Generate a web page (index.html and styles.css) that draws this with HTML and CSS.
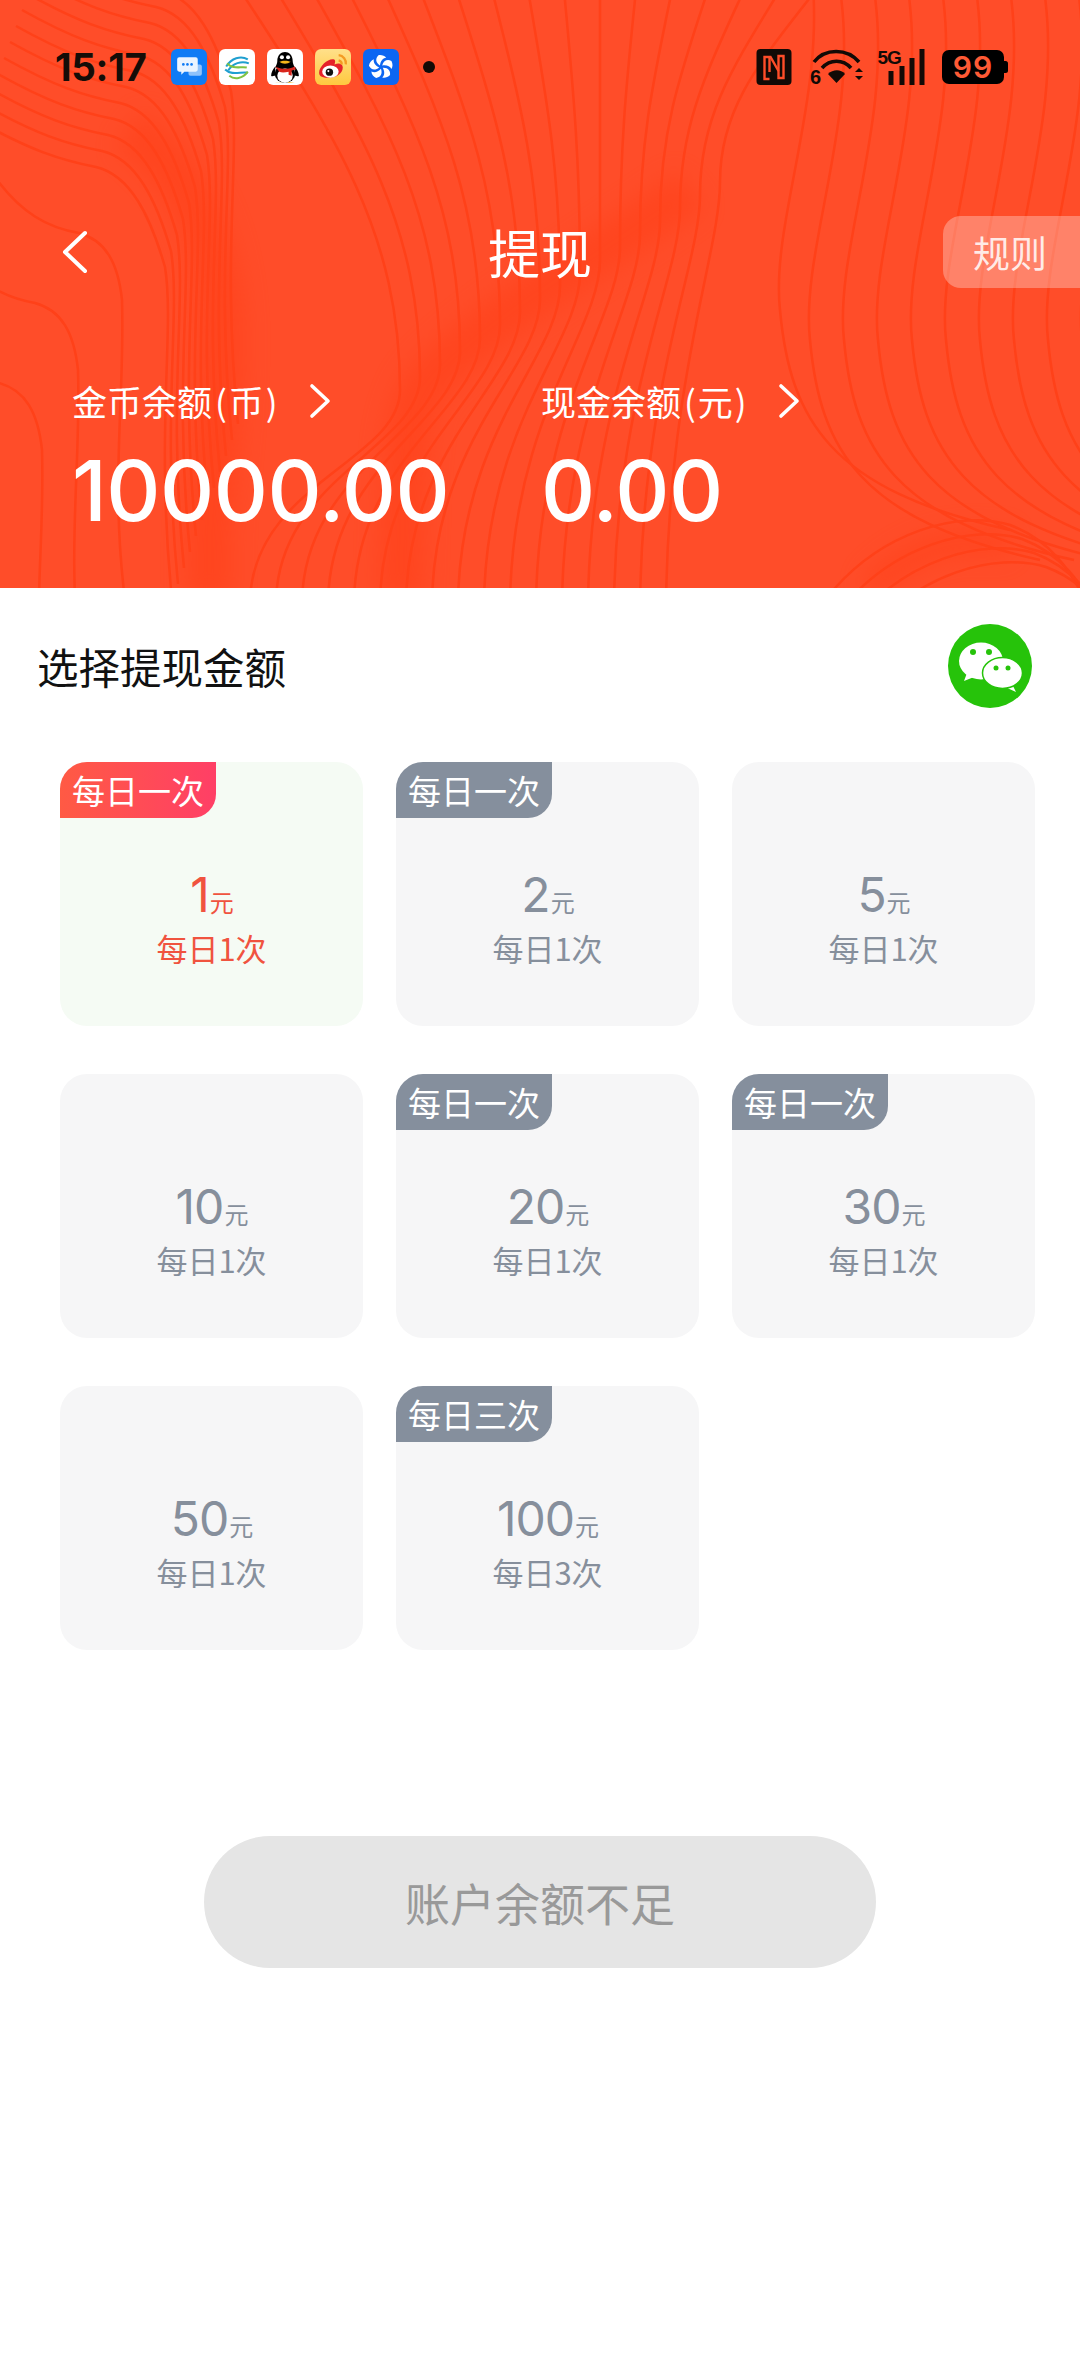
FILE: index.html
```html
<!DOCTYPE html>
<html lang="zh">
<head>
<meta charset="utf-8">
<title>提现</title>
<link rel="stylesheet" href="styles.css">
</head>
<body>
<header class="hero">
  <svg class="contours" viewBox="0 0 1080 588" aria-hidden="true">
    <defs>
      <path id="c1" d="M-20 122C30 150 60 160 96 167C130 175 150 215 165 267C175 330 155 430 172 600"/>
      <path id="c2" d="M-10 170C20 215 50 228 79 233C105 240 118 262 122 300C125 400 110 480 125 600"/>
      <path id="c6" d="M840 -10C860 120 800 250 810 340C820 450 860 520 1040 560"/>
      <path id="c8" d="M825 600C880 530 960 510 1010 525C1050 540 1070 570 1085 600"/>
    </defs>
    <g class="shade">
      <path d="M130 130C200 180 222 260 222 340C222 450 205 500 210 600"/>
      <path d="M690 190C640 230 480 320 425 385C400 420 405 500 400 600"/>
      <path class="shade-thin" d="M870 590C910 545 960 535 1010 545"/>
    </g>
    <g class="lines">
      <use href="#c1"/><use href="#c1" transform="translate(6 -16)"/><use href="#c1" transform="translate(12 -32)"/><use href="#c1" transform="translate(18 -48)"/><use href="#c1" transform="translate(24 -64)"/><use href="#c1" transform="translate(30 -80)"/><use href="#c1" transform="translate(36 -96)"/><use href="#c1" transform="translate(42 -112)"/><use href="#c1" transform="translate(48 -128)"/><use href="#c1" transform="translate(54 -144)"/><use href="#c1" transform="translate(60 -160)"/><use href="#c1" transform="translate(66 -176)"/>
      <use href="#c2"/><use href="#c2" transform="translate(-44 70)"/><use href="#c2" transform="translate(-80 150)"/>
      <path d="M240 -10C336 136 400 234 400 390C400 460 254 484 250 600"/>
      <path d="M276 -10C362 132 420 226 420 377C420 447 280 477 276 600"/>
      <path d="M312 -10C389 127 440 218 440 364C440 434 306 470 302 600"/>
      <path d="M348 -10C415 123 460 211 460 351C460 421 332 463 328 600"/>
      <path d="M384 -10C442 118 480 203 480 338C480 408 358 456 354 600"/>
      <path d="M420 -10C468 114 500 195 500 325C500 395 384 449 380 600"/>
      <path d="M456 -10C494 109 520 187 520 312C520 382 410 442 406 600"/>
      <path d="M492 -10C521 105 540 179 540 299C540 369 436 434 432 600"/>
      <path d="M528 -10C547 100 560 172 560 286C560 356 462 427 458 600"/>
      <path d="M564 -10C574 96 580 164 580 273C580 343 488 420 484 600"/>
      <path d="M600 -10C600 91 600 156 600 260C600 330 514 413 510 600"/>
      <path d="M636 -10C626 86 620 148 620 247C620 317 540 406 536 600"/>
      <path d="M672 -10C653 82 640 140 640 234C640 304 566 399 562 600"/>
      <path d="M708 -10C679 77 660 133 660 221C660 291 592 392 588 600"/>
      <path d="M744 -10C706 73 680 125 680 208C680 278 618 385 614 600"/>
      <path d="M780 -10C732 68 700 117 700 195C700 265 644 377 640 600"/>
      <path d="M816 -10C758 64 720 109 720 182C720 252 670 370 666 600"/>
      <use href="#c6" transform="translate(-30 -30)"/><use href="#c6"/><use href="#c6" transform="translate(34 0)"/><use href="#c6" transform="translate(68 0)"/><use href="#c6" transform="translate(102 0)"/><use href="#c6" transform="translate(136 0)"/><use href="#c6" transform="translate(170 0)"/><use href="#c6" transform="translate(204 0)"/><use href="#c6" transform="translate(238 0)"/><use href="#c6" transform="translate(272 0)"/>
      <use href="#c8"/><use href="#c8" transform="translate(12 14)"/><use href="#c8" transform="translate(24 28)"/><use href="#c8" transform="translate(36 42)"/>
    </g>
  </svg>

  <div class="status">
    <span class="time">15:17</span>
    <div class="apps">
      <svg class="app" viewBox="0 0 35 35"><rect width="35" height="35" rx="6" fill="#0f7bf5"/><rect x="17" y="15" width="13" height="11" rx="2" fill="#8fc2fb"/><path d="M8 8h16a2 2 0 0 1 2 2v10a2 2 0 0 1-2 2H13l-3 3v-3H8a2 2 0 0 1-2-2V10a2 2 0 0 1 2-2z" fill="#eaf4ff"/><circle cx="12" cy="15" r="1.300" fill="#0f7bf5"/><circle cx="16" cy="15" r="1.300" fill="#0f7bf5"/><circle cx="20" cy="15" r="1.300" fill="#0f7bf5"/></svg>
      <svg class="app" viewBox="0 0 35 35"><rect width="35" height="35" rx="6" fill="#fff"/><g fill="none" stroke-width="2"><path d="M7 17C12 9 21 6 28 10" stroke="#1f9fd0"/><path d="M9 21C13 14 22 11 29 14" stroke="#1f9fd0"/><path d="M8 14C13 20 21 17 27 18" stroke="#7fc241"/><path d="M6 20C12 26 21 22 28 23" stroke="#1f9fd0"/><path d="M10 26C15 30 23 29 28 22" stroke="#7fc241"/></g></svg>
      <svg class="app" viewBox="0 0 35 35"><rect width="35" height="35" rx="6" fill="#fff"/><ellipse cx="17.500" cy="24" rx="10" ry="9" fill="#000"/><path d="M10 12c0-12 15-12 15 0 0 2 1 4 2 6-5 3-14 3-19 0 1-2 2-4 2-6z" fill="#000"/><path d="M8 26c-2 0-4 1-4 0 0-3 2-7 4-9z M27 26c2 0 4 1 4 0 0-3-2-7-4-9z" fill="#000"/><ellipse cx="17.500" cy="26" rx="7.500" ry="7" fill="#fff"/><circle cx="14.500" cy="8" r="2" fill="#fff"/><circle cx="20.500" cy="8" r="2" fill="#fff"/><path d="M12 12.500c3-1.500 8-1.500 11 0-3 2.500-8 2.500-11 0z" fill="#f6b51a"/><path d="M8 17c6 3 13 3 19 0l1 3-4 1 0 5-3-1v-3c-4 1-7 1-9 0z" fill="#d9251c"/><path d="M9 33l6-1h-1l-6 1zM20 32l7 1-6 0z" fill="#f6b51a"/></svg>
      <svg class="app" viewBox="0 0 35 35"><defs><linearGradient id="wb" x1="0" y1="0" x2="0" y2="1"><stop offset="0" stop-color="#ffe08a"/><stop offset="1" stop-color="#ffc93f"/></linearGradient></defs><rect width="35" height="35" rx="6" fill="url(#wb)"/><path d="M4 23c0-6 8-13 13-13 3 0 3 2 2 5 4-2 8-1 8 3 0 6-7 10-13 10S4 27 4 23z" fill="#e6212a"/><ellipse cx="15" cy="22" rx="8" ry="6" fill="#fff"/><circle cx="14" cy="22.500" r="3.600" fill="#111"/><circle cx="13" cy="21.500" r="1" fill="#fff"/><path d="M23 6a8 8 0 0 1 7 9M23 11a4 4 0 0 1 3 4" fill="none" stroke="#f49b23" stroke-width="2.200"/></svg>
      <svg class="app" viewBox="0 0 35 35"><rect width="35" height="35" rx="6" fill="#0c66f2"/><g fill="#fff"><path id="blade" d="M16.500 16C12 13 12 9 15 6c3-.5 6 .5 7.500 2.500C19 9 17 12 16.500 16z"/><use href="#blade" transform="rotate(72 17.500 17.500)"/><use href="#blade" transform="rotate(144 17.500 17.500)"/><use href="#blade" transform="rotate(216 17.500 17.500)"/><use href="#blade" transform="rotate(288 17.500 17.500)"/></g></svg>
      <span class="dot"></span>
    </div>
    <div class="sysicons">
      <svg class="nfc" viewBox="0 0 35 36"><rect width="35" height="36" rx="4" fill="#120a06"/><path d="M13 30H8V8h6l8 14" fill="none" stroke="#ff4d29" stroke-width="2.400"/><path d="M13 9v14M22 14v15h5V7h-5v7" fill="none" stroke="#ff4d29" stroke-width="2.400"/></svg>
      <svg class="wifi" viewBox="0 0 54 36"><g fill="none" stroke="#120a06" stroke-width="3.600"><path d="M4 13C15 -1 37 -1 49 13"/><path d="M12 19C20 10 33 10 41 19"/></g><path d="M18 25c5-5 13-5 17 0l-8.500 9z" fill="#120a06"/><path d="M45 23l4 -4 4 4zM45 27l4 4 4-4z" fill="#120a06"/><text class="wifi-six" x="0" y="35">6</text></svg>
      <svg class="signal" viewBox="0 0 46 36"><text class="five-g" x="-1" y="15">5G</text><g fill="#120a06"><rect x="10" y="22" width="5" height="14"/><rect x="21" y="17" width="5" height="19"/><rect x="31" y="9" width="5" height="27"/><rect x="41" y="0" width="5" height="36"/></g></svg>
      <svg class="battery" viewBox="0 0 66 34"><rect width="62" height="34" rx="7" fill="#000"/><path d="M62 11h1.500a2.500 2.500 0 0 1 2.500 2.500v7a2.500 2.500 0 0 1-2.500 2.500H62z" fill="#000"/><text class="batt" x="31" y="28">99</text></svg>
    </div>
  </div>

  <nav class="nav">
    <svg class="back" viewBox="0 0 30 44"><path d="M25 3L5 22l20 19" fill="none" stroke="#fff" stroke-width="4" stroke-linecap="round" stroke-linejoin="round"/></svg>
    <h1 class="page-title">提现</h1>
    <span class="rule">规则</span>
  </nav>

  <div class="balances">
    <div class="balance balance-coin">
      <div class="label">金币余额<span class="unit">(币)</span><svg class="chev" viewBox="0 0 22 36"><path d="M3 3l16 15L3 33" fill="none" stroke="#fff" stroke-width="3.600" stroke-linecap="round" stroke-linejoin="round"/></svg></div>
      <div class="num">10000.00</div>
    </div>
    <div class="balance">
      <div class="label">现金余额<span class="unit">(元)</span><svg class="chev" viewBox="0 0 22 36"><path d="M3 3l16 15L3 33" fill="none" stroke="#fff" stroke-width="3.600" stroke-linecap="round" stroke-linejoin="round"/></svg></div>
      <div class="num">0.00</div>
    </div>
  </div>
</header>

<main>
  <div class="pick">
    <h2 class="pick-title">选择提现金额</h2>
    <svg class="wechat" viewBox="0 0 84 84"><circle cx="42" cy="42" r="42" fill="#26c30a"/><path d="M19 49l-3 8 10-4z" fill="#fff"/><ellipse cx="33" cy="37" rx="22" ry="18.500" fill="#fff"/><circle cx="25" cy="28" r="3" fill="#26c30a"/><circle cx="41" cy="28" r="3" fill="#26c30a"/><path d="M63 58l5 10-11-5z" fill="#fff"/><ellipse cx="54.500" cy="49" rx="20" ry="15.500" fill="#fff" stroke="#26c30a" stroke-width="1.500"/><circle cx="48" cy="44" r="2.500" fill="#26c30a"/><circle cx="60" cy="44" r="2.500" fill="#26c30a"/></svg>
  </div>

  <div class="grid">
    <div class="card card-active"><span class="badge">每日一次</span><div class="amount">1<small>元</small></div><div class="times">每日1次</div></div>
    <div class="card"><span class="badge">每日一次</span><div class="amount">2<small>元</small></div><div class="times">每日1次</div></div>
    <div class="card"><div class="amount">5<small>元</small></div><div class="times">每日1次</div></div>
    <div class="card"><div class="amount">10<small>元</small></div><div class="times">每日1次</div></div>
    <div class="card"><span class="badge">每日一次</span><div class="amount">20<small>元</small></div><div class="times">每日1次</div></div>
    <div class="card"><span class="badge">每日一次</span><div class="amount">30<small>元</small></div><div class="times">每日1次</div></div>
    <div class="card"><div class="amount">50<small>元</small></div><div class="times">每日1次</div></div>
    <div class="card"><span class="badge">每日三次</span><div class="amount">100<small>元</small></div><div class="times">每日3次</div></div>
  </div>

  <button class="submit" type="button">账户余额不足</button>
</main>
</body>
</html>
```
FILE: styles.css
```css
* { box-sizing: border-box; }
html, body { margin: 0; padding: 0; }
body {
  width: 1080px;
  min-height: 2362px;
  background: #fff;
  font-family: "Noto Sans CJK SC", "Inter", sans-serif;
  overflow-x: hidden;
}
.hero {
  position: relative;
  height: 588px;
  padding-top: 49px;
  background: #ff4d29;
  color: #fff;
  overflow: hidden;
}
.contours { position: absolute; inset: 0; width: 1080px; height: 588px; }
.lines { fill: none; stroke: #ff4119; stroke-width: 2.500; }
.shade { fill: none; stroke: #ff3f17; stroke-width: 44; opacity: .55; filter: blur(12px); }
.shade-thin { stroke-width: 24; }

.status {
  position: relative;
  display: flex;
  align-items: center;
  height: 36px;
  padding: 0 72px 0 55px;
}
.time {
  font-family: "Inter", sans-serif;
  font-weight: 700;
  font-size: 38.500px;
  line-height: 36px;
  letter-spacing: -.3px;
  color: #150d08;
  width: 116px;
}
.apps { display: flex; align-items: center; gap: 12px; }
.app { width: 36px; height: 36px; display: block; }
.dot { width: 12px; height: 12px; border-radius: 50%; background: #120a06; margin-left: 12px; }
.sysicons { display: flex; align-items: center; margin-left: auto; }
.sysicons svg { display: block; overflow: visible; }
.nfc { width: 36px; height: 36px; }
.wifi { width: 54px; height: 36px; margin-left: 18px; }
.signal { width: 49px; height: 36px; margin-left: 13px; }
.battery { width: 66px; height: 34px; margin-left: 16px; }
.wifi-six { font: 700 20px "Liberation Sans", sans-serif; fill: #120a06; }
.five-g { font: 700 19px "Liberation Sans", sans-serif; fill: #120a06; letter-spacing: -1px; }
.batt { font: 600 30px "Inter", sans-serif; fill: #ff5a35; text-anchor: middle; letter-spacing: 1px; }

.nav {
  position: relative;
  display: flex;
  align-items: center;
  justify-content: space-between;
  height: 72px;
  margin-top: 131px;
  padding-left: 60px;
}
.back { width: 30px; height: 44px; display: block; }
.page-title {
  margin: 0;
  font-size: 52px;
  font-weight: 400;
  line-height: 72px;
  position: absolute;
  left: 0;
  right: 0;
  text-align: center;
}
.rule {
  width: 137px;
  height: 72px;
  line-height: 72px;
  padding-left: 30px;
  font-size: 37px;
  color: rgba(255,255,255,.85);
  background: rgba(255,255,255,.3);
  border-radius: 18px 0 0 18px;
}
.balances {
  position: relative;
  display: flex;
  margin-top: 88px;
  padding-left: 72px;
}
.balance-coin { width: 469px; }
.label {
  display: flex;
  align-items: center;
  font-size: 35px;
  line-height: 50px;
  font-weight: 400;
}
.unit { letter-spacing: 2px; margin-left: 3px; }
.chev { width: 22px; height: 36px; margin-left: 29px; }
.num {
  font-family: "Inter", sans-serif;
  font-weight: 500;
  font-size: 84px;
  line-height: 100px;
  margin-top: 15px;
  letter-spacing: -.5px;
}

.pick {
  display: flex;
  align-items: center;
  justify-content: space-between;
  padding: 36px 48px 0 37px;
  margin-bottom: 54px;
}
.pick-title { margin: 0; font-size: 41.500px; font-weight: 400; color: #111; }
.wechat { width: 84px; height: 84px; display: block; }

.grid {
  display: grid;
  grid-template-columns: repeat(3, 303px);
  grid-auto-rows: 264px;
  gap: 48px 33px;
  padding-left: 60px;
}
.card {
  position: relative;
  display: flex;
  flex-direction: column;
  align-items: center;
  justify-content: center;
  padding-top: 52px;
  background: #f6f6f7;
  border-radius: 27px;
  color: #868f9c;
  overflow: hidden;
}
.badge {
  position: absolute;
  left: 0;
  top: 0;
  width: 156px;
  height: 56px;
  line-height: 56px;
  text-align: center;
  font-size: 33px;
  color: #fff;
  background: #858f9d;
  border-bottom-right-radius: 24px;
  white-space: nowrap;
}
.amount {
  font-family: "Inter", sans-serif;
  font-size: 48px;
  line-height: 56px;
  letter-spacing: -1px;
  font-weight: 400;
}
.amount small {
  font-family: "Noto Sans CJK SC", sans-serif;
  font-size: 24px;
  line-height: 0;
  margin-left: 1px;
}
.times { font-size: 31px; line-height: 50px; }
.card-active { background: #f5fbf4; color: #f0533f; }
.card-active .badge { background: linear-gradient(90deg, #ff5a44, #ff3f66); }

.submit {
  display: block;
  width: 672px;
  height: 132px;
  margin: 186px 0 0 204px;
  border: 0;
  border-radius: 66px;
  background: #e5e5e5;
  color: #999;
  font: 400 45px "Noto Sans CJK SC", sans-serif;
}
```
